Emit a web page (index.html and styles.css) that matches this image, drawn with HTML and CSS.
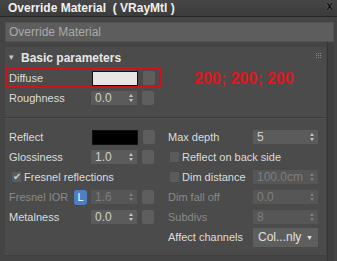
FILE: index.html
```html
<!DOCTYPE html>
<html lang="en">
<head>
    <meta charset="UTF-8">
    <title>Override Material</title>
    <link rel="stylesheet" href="styles.css">
</head>
<body>
    <div class="titlebar">
        <span class="title">Override Material&nbsp; ( VRayMtl )</span>
        <span class="close">x</span>
    </div>

    <div class="namefield">Override Material</div>

    <div class="main">
        <div class="rollout">
            <div class="rollout-head">
                <span class="arrow">&#9662;</span>
                <span class="head-text">Basic parameters</span>
                <svg class="grip" width="6" height="6" viewBox="0 0 6 6">
                    <g fill="#8c8c8c">
                        <rect x="0" y="0" width="1" height="1"/><rect x="2" y="0" width="1" height="1"/><rect x="4" y="0" width="1" height="1"/>
                        <rect x="0" y="2" width="1" height="1"/><rect x="2" y="2" width="1" height="1"/><rect x="4" y="2" width="1" height="1"/>
                        <rect x="0" y="4" width="1" height="1"/><rect x="2" y="4" width="1" height="1"/><rect x="4" y="4" width="1" height="1"/>
                    </g>
                </svg>
            </div>

            <!-- annotation over the diffuse row -->
            <div class="mark"></div>
            <div class="mark-text">200; 200; 200</div>

            <div class="row">
                <span class="lbl">Diffuse</span>
                <span class="swatch light"></span>
                <span class="mapbtn"></span>
            </div>
            <div class="row">
                <span class="lbl">Roughness</span>
                <span class="spinner">0.0<i class="arrows"></i></span>
                <span class="mapbtn"></span>
            </div>

            <div class="sep"></div>

            <div class="cols">
                <div class="col">
                    <div class="row">
                        <span class="lbl">Reflect</span>
                        <span class="swatch dark"></span>
                        <span class="mapbtn"></span>
                    </div>
                    <div class="row">
                        <span class="lbl">Glossiness</span>
                        <span class="spinner">1.0<i class="arrows"></i></span>
                        <span class="mapbtn"></span>
                    </div>
                    <div class="row">
                        <span class="check on">&#10004;</span>
                        <span class="cb-text">Fresnel reflections</span>
                    </div>
                    <div class="row">
                        <span class="lbl short off">Fresnel IOR</span>
                        <span class="lock">L</span>
                        <span class="spinner off">1.6<i class="arrows"></i></span>
                        <span class="mapbtn"></span>
                    </div>
                    <div class="row">
                        <span class="lbl">Metalness</span>
                        <span class="spinner">0.0<i class="arrows"></i></span>
                        <span class="mapbtn"></span>
                    </div>
                </div>

                <div class="col right">
                    <div class="row">
                        <span class="lbl wide">Max depth</span>
                        <span class="spinner long">5<i class="arrows"></i></span>
                    </div>
                    <div class="row">
                        <span class="check"></span>
                        <span class="cb-text">Reflect on back side</span>
                    </div>
                    <div class="row">
                        <span class="check"></span>
                        <span class="cb-text cb-fixed">Dim distance</span>
                        <span class="spinner long off">100.0cm<i class="arrows"></i></span>
                    </div>
                    <div class="row">
                        <span class="lbl wide off">Dim fall off</span>
                        <span class="spinner long off">0.0<i class="arrows"></i></span>
                    </div>
                    <div class="row">
                        <span class="lbl wide off">Subdivs</span>
                        <span class="spinner long off">8<i class="arrows"></i></span>
                    </div>
                    <div class="row">
                        <span class="lbl wide">Affect channels</span>
                        <span class="dropdown">Col...nly<span class="drop-arrow">&#9660;</span></span>
                    </div>
                </div>
            </div>
        </div>
        <div class="scroll"></div>
    </div>
</body>
</html>
```

FILE: styles.css
```css
html, body {
    margin: 0;
    padding: 0;
    width: 337px;
    height: 261px;
    overflow: hidden;
    background: #444444;
    font-family: 'Liberation Sans', Arial, sans-serif;
    font-size: 11px;
    color: #dcdcdc;
}

.titlebar {
    height: 16px;
    display: flex;
    align-items: center;
    justify-content: space-between;
    padding: 0 4px 0 8px;
    background: linear-gradient(#474747, #3b3b3b);
    border-bottom: 1px solid #262626;
}

.title {
    font-size: 12px;
    font-weight: bold;
    color: #f0f0f0;
    white-space: nowrap;
}

.close {
    font-size: 12px;
    font-weight: bold;
    color: #0c0c0c;
    text-shadow: 0 0 1px #9a9a9a;
    margin-top: -4px;
}

.namefield {
    height: 18px;
    margin: 5px 3px 0 5px;
    padding-left: 3px;
    background: #5d5d5d;
    border: 1px solid #525252;
    color: #a9a9a9;
    font-size: 12px;
    line-height: 18px;
}

.main {
    display: flex;
    margin-top: 5px;
    height: 215px;
}

.rollout {
    position: relative;
    width: 321px;
    height: 209px;
    margin-left: 5px;
    padding-left: 4px;
    background: #4b4b4b;
    border-bottom: 1px solid #3e3e3e;
    box-sizing: border-box;
}

.scroll {
    width: 6px;
    margin-left: 1px;
    margin-top: -5px;
    background: #3f3f3f;
    border-left: 1px solid #353535;
}

.rollout-head {
    display: flex;
    align-items: center;
    height: 21px;
}

.arrow {
    font-size: 9px;
    color: #c8c8c8;
    width: 12px;
    margin-top: -2px;
}

.head-text {
    font-size: 12px;
    font-weight: bold;
    color: #e6e6e6;
    flex: 1;
}

.grip {
    margin: -4px 4px 0 0;
}

.mark {
    position: absolute;
    left: 0;
    top: 20px;
    width: 157px;
    height: 21px;
    border: 2px solid #d2121a;
    box-sizing: border-box;
}

.mark-text {
    position: absolute;
    left: 189px;
    top: 23px;
    font-size: 16px;
    font-weight: bold;
    color: #e3141c;
}

.row {
    display: flex;
    align-items: center;
    height: 20px;
    white-space: nowrap;
}

.lbl {
    width: 82px;
}

.lbl.short {
    width: 65px;
}

.lbl.wide {
    width: 85px;
}

.off {
    color: #8a8a8a;
}

.swatch {
    width: 44px;
    height: 13px;
    border: 1px solid #111;
    margin-left: 1px;
}

.swatch.light {
    background: #e6e6e6;
}

.swatch.dark {
    background: #000;
}

.mapbtn {
    width: 12px;
    height: 14px;
    margin-left: 5px;
    background: #5e5e5e;
    border-radius: 2px;
}

.spinner {
    position: relative;
    width: 46px;
    height: 14px;
    padding-left: 4px;
    box-sizing: border-box;
    background: #5b5b5b;
    color: #cfcfcf;
    font-size: 12px;
    line-height: 14px;
}

.spinner.long {
    width: 65px;
}

.spinner.off {
    background: #565656;
    color: #7e7e7e;
}

.arrows {
    position: absolute;
    right: 4px;
    top: 3px;
    width: 0;
    height: 0;
    border-left: 2px solid transparent;
    border-right: 2px solid transparent;
    border-bottom: 3px solid #c4c4c4;
}

.arrows::after {
    content: "";
    position: absolute;
    left: -2px;
    top: 5px;
    border-left: 2px solid transparent;
    border-right: 2px solid transparent;
    border-top: 3px solid #c4c4c4;
}

.spinner.off .arrows {
    border-bottom-color: #7e7e7e;
}

.spinner.off .arrows::after {
    border-top-color: #7e7e7e;
}

.check {
    width: 9px;
    height: 10px;
    margin-left: 2px;
    margin-right: 3px;
    background: #5b5b5b;
    color: #cfcfcf;
    font-size: 10px;
    line-height: 10px;
    text-align: center;
}

.check.on {
    margin-left: 3px;
    background: #5b5b5b;
}

.cb-text {
    font-size: 11px;
}

.cb-fixed {
    width: 71px;
}

.lock {
    width: 13px;
    height: 15px;
    margin-right: 4px;
    background: #4d7fc2;
    border-radius: 3px;
    color: #fff;
    font-size: 11px;
    line-height: 15px;
    text-align: center;
}

.cols {
    display: grid;
    grid-template-columns: 159px 1fr;
    margin-top: 8px;
}

.sep {
    height: 1px;
    margin: 9px 0 0 -4px;
    background: #393939;
    border-bottom: 1px solid #525252;
}

.dropdown {
    display: flex;
    justify-content: space-between;
    align-items: center;
    width: 65px;
    height: 19px;
    padding: 0 5px;
    box-sizing: border-box;
    background: #5e5e5e;
    color: #e0e0e0;
    font-size: 12px;
}

.drop-arrow {
    font-size: 7px;
    color: #e0e0e0;
}
```
